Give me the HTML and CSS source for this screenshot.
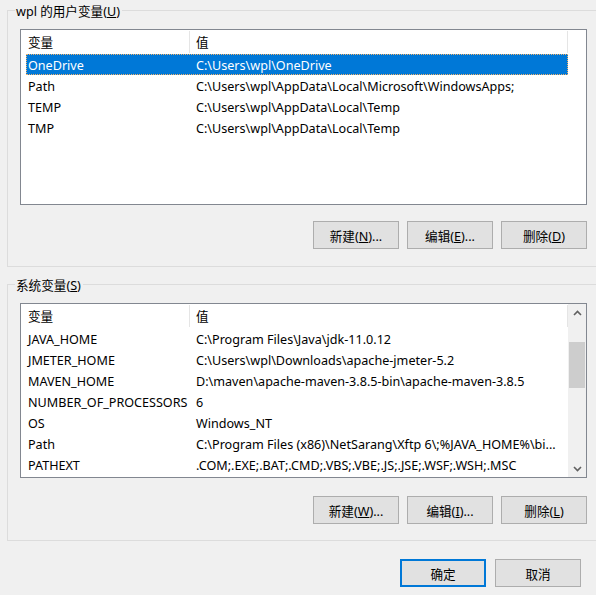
FILE: index.html
```html
<!DOCTYPE html>
<html lang="zh-CN">
  <head>
    <meta charset="utf-8" />
    <title>环境变量</title>
    <link rel="stylesheet" href="styles.css">
  </head>
  <body>
    <div class="dialog">
      <!-- user variables -->
      <div class="group">
        <div class="group-title">wpl 的用户变量(<u>U</u>)</div>
        <div class="group-body">
          <div class="listview list-user">
            <div class="lv-main">
              <div class="lv-head">
                <span class="head-name">变量</span>
                <span class="head-value">值</span>
              </div>
              <div class="lv-row selected">
                <span class="cell-name">OneDrive</span>
                <span class="cell-value">C:\Users\wpl\OneDrive</span>
              </div>
              <div class="lv-row">
                <span class="cell-name">Path</span>
                <span class="cell-value">C:\Users\wpl\AppData\Local\Microsoft\WindowsApps;</span>
              </div>
              <div class="lv-row">
                <span class="cell-name">TEMP</span>
                <span class="cell-value">C:\Users\wpl\AppData\Local\Temp</span>
              </div>
              <div class="lv-row">
                <span class="cell-name">TMP</span>
                <span class="cell-value">C:\Users\wpl\AppData\Local\Temp</span>
              </div>
            </div>
          </div>
          <div class="btn-row">
            <button class="btn">新建(<u>N</u>)...</button>
            <button class="btn">编辑(<u>E</u>)...</button>
            <button class="btn">删除(<u>D</u>)</button>
          </div>
        </div>
      </div>

      <!-- system variables -->
      <div class="group group-system">
        <div class="group-title">系统变量(<u>S</u>)</div>
        <div class="group-body">
          <div class="listview list-system">
            <div class="lv-main">
              <div class="lv-head">
                <span class="head-name">变量</span>
                <span class="head-value">值</span>
              </div>
              <div class="lv-row">
                <span class="cell-name">JAVA_HOME</span>
                <span class="cell-value">C:\Program Files\Java\jdk-11.0.12</span>
              </div>
              <div class="lv-row">
                <span class="cell-name">JMETER_HOME</span>
                <span class="cell-value">C:\Users\wpl\Downloads\apache-jmeter-5.2</span>
              </div>
              <div class="lv-row">
                <span class="cell-name">MAVEN_HOME</span>
                <span class="cell-value">D:\maven\apache-maven-3.8.5-bin\apache-maven-3.8.5</span>
              </div>
              <div class="lv-row">
                <span class="cell-name">NUMBER_OF_PROCESSORS</span>
                <span class="cell-value">6</span>
              </div>
              <div class="lv-row">
                <span class="cell-name">OS</span>
                <span class="cell-value">Windows_NT</span>
              </div>
              <div class="lv-row">
                <span class="cell-name">Path</span>
                <span class="cell-value">C:\Program Files (x86)\NetSarang\Xftp 6\;%JAVA_HOME%\bi...</span>
              </div>
              <div class="lv-row">
                <span class="cell-name">PATHEXT</span>
                <span class="cell-value">.COM;.EXE;.BAT;.CMD;.VBS;.VBE;.JS;.JSE;.WSF;.WSH;.MSC</span>
              </div>
            </div>
            <div class="scrollbar">
              <div class="sb-arrow">
                <svg width="9" height="6" viewBox="0 0 9 6"><path d="M1 5 L4.5 1.5 L8 5" fill="none" stroke="#606060" stroke-width="1.6"/></svg>
              </div>
              <div class="sb-track">
                <div class="sb-thumb"></div>
              </div>
              <div class="sb-arrow">
                <svg width="9" height="6" viewBox="0 0 9 6"><path d="M1 1 L4.5 4.5 L8 1" fill="none" stroke="#606060" stroke-width="1.6"/></svg>
              </div>
            </div>
          </div>
          <div class="btn-row btn-row-system">
            <button class="btn">新建(<u>W</u>)...</button>
            <button class="btn">编辑(<u>I</u>)...</button>
            <button class="btn">删除(<u>L</u>)</button>
          </div>
        </div>
      </div>

      <div class="dialog-buttons">
        <button class="btn btn-default">确定</button>
        <button class="btn">取消</button>
      </div>
    </div>
  </body>
</html>
```

FILE: styles.css
```css
html, body {
  margin: 0;
  background-color: #f0f0f0;
  overflow: hidden;
}
body {
  font-family: "Noto Sans", "Noto Sans CJK SC", sans-serif;
  font-size: 12.6px;
  color: #000;
}
.dialog {
  width: 596px;
  height: 595px;
  padding-top: 10px;
  box-sizing: border-box;
}

/* group boxes */
.group {
  margin-left: 7px;
  width: 589px;
  box-sizing: border-box;
  border: 1px solid #dcdcdc;
  border-right: none;
  padding-bottom: 17px;
}
.group-system {
  margin-top: 17px;
  padding-bottom: 16px;
}
.group-title {
  display: table;
  margin: -8px 0 0 7px;
  padding: 0 2px 0 1px;
  line-height: 17px;
  background-color: #f0f0f0;
}
.group-body {
  width: 567px;
  margin-left: 12px;
}

/* list views */
.listview {
  display: flex;
  margin-top: 9px;
  border: 1px solid #828790;
  background-color: #fff;
  box-sizing: border-box;
}
.list-user {
  height: 176px;
}
.list-system {
  height: 175px;
}
.lv-main {
  width: 547px;
  overflow: hidden;
}
.lv-head {
  display: flex;
  height: 24px;
}
.head-name, .head-value {
  box-sizing: border-box;
  border-right: 1px solid #e5e5e5;
  margin: 1px 0;
  padding-top: 1px;
  line-height: 21px;
}
.head-name {
  width: 169px;
  padding-left: 7px;
}
.head-value {
  width: 378px;
  padding-left: 6px;
}
.lv-row {
  display: flex;
  margin-left: 5px;
  width: 542px;
  height: 21px;
  line-height: 21px;
  padding-top: 1px;
  box-sizing: border-box;
  white-space: nowrap;
}
.lv-row.selected {
  background-color: #0078d7;
  color: #fff;
  outline: 1px dotted #f2b36b;
  outline-offset: -1px;
}
.cell-name {
  width: 164px;
  padding-left: 2px;
  box-sizing: border-box;
  overflow: hidden;
}
.cell-value {
  width: 378px;
  padding-left: 6px;
  box-sizing: border-box;
  overflow: hidden;
}

/* scroll bar */
.scrollbar {
  width: 18px;
  display: flex;
  flex-direction: column;
  background-color: #f0f0f0;
}
.sb-arrow {
  height: 17px;
  display: flex;
  align-items: center;
  justify-content: center;
}
.sb-track {
  flex: 1;
  padding-top: 21px;
}
.sb-thumb {
  margin: 0 1px;
  height: 46px;
  background-color: #cdcdcd;
}

/* buttons */
.btn-row {
  display: flex;
  justify-content: flex-end;
  gap: 8px;
  margin-top: 16px;
}
.btn-row-system {
  margin-top: 18px;
}
.btn {
  width: 86px;
  height: 28px;
  padding: 0;
  font-family: inherit;
  font-size: 12.6px;
  color: #000;
  background-color: #e1e1e1;
  border: 1px solid #adadad;
  border-radius: 0;
}
.btn-default {
  border: 2px solid #0078d7;
}
.dialog-buttons {
  display: flex;
  justify-content: flex-end;
  gap: 9px;
  margin-top: 18px;
  padding-right: 15px;
}
```
